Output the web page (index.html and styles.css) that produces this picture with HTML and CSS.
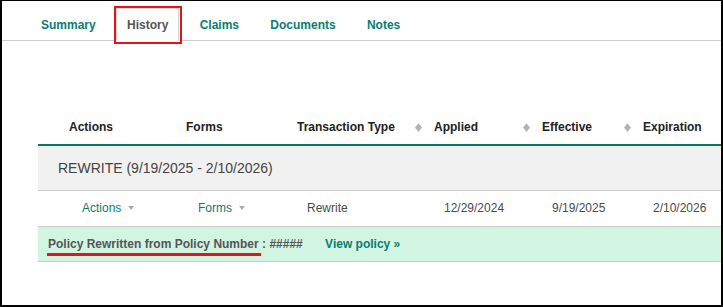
FILE: index.html
```html
<!DOCTYPE html>
<html lang="en">
<head>
    <meta charset="UTF-8">
    <meta name="viewport" content="width=device-width, initial-scale=1.0">
    <title>Policy History</title>
    <link rel="stylesheet" href="styles.css">
</head>
<body>
    <div class="frame">
        <div class="tab-bar">
            <div class="tab">Summary</div>
            <div class="tab active marked">History</div>
            <div class="tab">Claims</div>
            <div class="tab">Documents</div>
            <div class="tab">Notes</div>
        </div>

        <table class="history-table">
            <colgroup>
                <col class="c1">
                <col class="c2">
                <col class="c3">
                <col class="c4">
                <col class="c5">
                <col class="c6">
            </colgroup>
            <thead>
                <tr>
                    <th class="h1">Actions</th>
                    <th class="h2">Forms</th>
                    <th class="h3">Transaction Type</th>
                    <th class="hs"><span class="sort"><svg viewBox="0 0 8 10"><polygon points="4,0 8,5 4,10 0,5"/></svg></span>Applied</th>
                    <th class="hs"><span class="sort"><svg viewBox="0 0 8 10"><polygon points="4,0 8,5 4,10 0,5"/></svg></span>Effective</th>
                    <th class="hs"><span class="sort"><svg viewBox="0 0 8 10"><polygon points="4,0 8,5 4,10 0,5"/></svg></span>Expiration</th>
                </tr>
            </thead>
            <tbody>
                <tr class="group-row">
                    <td colspan="6">REWRITE (9/19/2025 - 2/10/2026)</td>
                </tr>
                <tr class="data-row">
                    <td class="d1"><span class="link">Actions</span><span class="caret"></span></td>
                    <td class="d2"><span class="link">Forms</span><span class="caret"></span></td>
                    <td class="d3">Rewrite</td>
                    <td class="ds">12/29/2024</td>
                    <td class="ds">9/19/2025</td>
                    <td class="ds">2/10/2026</td>
                </tr>
                <tr class="note-row">
                    <td colspan="6">
                        <span class="underlined">Policy Rewritten from Policy Number</span> : #####
                        <span class="view-link">View policy &raquo;</span>
                    </td>
                </tr>
            </tbody>
        </table>
    </div>
</body>
</html>
```

FILE: styles.css
```css
* {
    margin: 0;
    padding: 0;
    box-sizing: border-box;
    font-family: "Liberation Sans", Arial, sans-serif;
}

body {
    background: #FFFFFF;
    color: #444444;
}

.frame {
    width: 723px;
    height: 307px;
    border: 2px solid #000000;
    border-top-width: 1px;
    overflow: hidden;
    background: #FFFFFF;
}

.tab-bar {
    display: flex;
    gap: 9.3px;
    padding: 7px 0 0 28px;
    border-bottom: 1px solid #CCCCCC;
}

.tab {
    padding: 1px 10px 0;
    line-height: 30px;
    border: 1px solid transparent;
    margin-bottom: -1px;
    font-size: 12px;
    font-weight: bold;
    color: #0A7D70;
}

.tab.active {
    background: #FFFFFF;
    border-color: #D6D6D6;
    border-bottom-color: #FFFFFF;
    color: #555555;
}

.marked {
    position: relative;
}

.marked::after {
    content: "";
    position: absolute;
    top: -3px;
    left: -3px;
    right: -4px;
    bottom: -4px;
    border: 2px solid #E5141B;
}

.history-table {
    margin: 69px 0 0 36px;
    width: 700px;
    table-layout: fixed;
    border-collapse: separate;
    border-spacing: 0;
    font-size: 12px;
}

.c1 { width: 122px; }
.c2 { width: 122px; }
.c3 { width: 122px; }
.c4 { width: 108px; }
.c5 { width: 101px; }
.c6 { width: 125px; }

th {
    text-align: left;
    line-height: 34px;
    font-weight: bold;
    color: #222222;
    border-bottom: 2px solid #0B7562;
    white-space: nowrap;
}

.h1 { padding-left: 31px; }
.h2 { padding-left: 26px; }
.h3 { padding-left: 15px; }
.hs { padding-left: 11px; }

.sort {
    display: inline-block;
    width: 7px;
    height: 9px;
    margin-right: 12px;
    vertical-align: -1px;
}

.sort svg {
    display: block;
    width: 7px;
    height: 9px;
    fill: #B3B3B3;
}

td {
    white-space: nowrap;
    border-bottom: 1px solid #CCCCCC;
}

.group-row td {
    background: #F1F1F1;
    line-height: 44px;
    padding-left: 20px;
    font-size: 14px;
    color: #444444;
}

.data-row td {
    line-height: 35px;
    color: #4A4A4A;
}

.d1 { padding-left: 44px; }
.d2 { padding-left: 38px; }
.d3 { padding-left: 25px; }
.ds { padding-left: 40px; }

.link {
    color: #0A7D70;
}

.caret {
    display: inline-block;
    margin-left: 7px;
    width: 0;
    height: 0;
    border-left: 3px solid transparent;
    border-right: 3px solid transparent;
    border-top: 4px solid #ABABAB;
    vertical-align: 2px;
}

.note-row td {
    background: #D1F5E2;
    line-height: 34px;
    padding-left: 10px;
    font-weight: bold;
    color: #555555;
}

.underlined {
    position: relative;
}

.underlined::after {
    content: "";
    position: absolute;
    left: -1px;
    right: -2px;
    bottom: -5px;
    height: 3px;
    background: #E5141B;
}

.view-link {
    margin-left: 19px;
    color: #0A7D70;
}
```
